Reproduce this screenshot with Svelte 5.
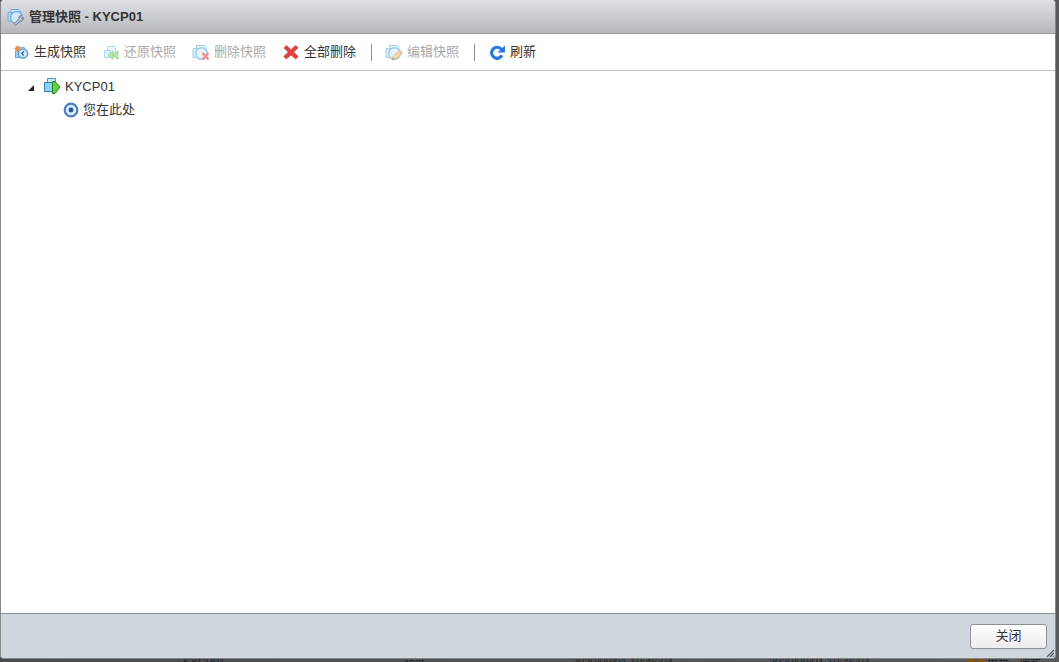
<script lang="ts">
  type Tool = { id: string; label: string; disabled?: boolean; separated?: boolean };

  const vmName = 'KYCP01';
  const tools: Tool[] = [
    { id: 'take', label: '生成快照' },
    { id: 'revert', label: '还原快照', disabled: true },
    { id: 'delete', label: '删除快照', disabled: true },
    { id: 'deleteAll', label: '全部删除' },
    { id: 'edit', label: '编辑快照', disabled: true, separated: true },
    { id: 'refresh', label: '刷新', separated: true }
  ];

  let expanded = $state(true);
</script>

<div class="stage">
  <section class="dialog" role="dialog" aria-labelledby="dialog-title">
    <header>
      <svg class="title-icon" viewBox="0 0 18 18" aria-hidden="true">
        <path d="M4 4V1.500h7.500l2 2V8H4z" fill="#cce9fb" stroke="#6aa9e0" />
        <path d="M1 4.500h5v8.500H1z" fill="#b4dcf8" stroke="#6aa9e0" />
        <circle cx="9.500" cy="9.500" r="6" fill="#d3e9fb" stroke="#7bb1e6" stroke-width="1.500" />
        <path d="M7 15.800l5-5c-.6-2 .8-3.800 2.700-3.600l-1.300 2 1.300 1.400 2-.8c.2 2-1.600 3.300-3.400 2.700l-4.700 4.700z" fill="#c6cad0" stroke="#747b86" />
      </svg>
      <h1 id="dialog-title">管理快照 - {vmName}</h1>
    </header>

    <div class="toolbar" role="toolbar" aria-label="管理快照">
      {#each tools as tool (tool.id)}
        {#if tool.separated}<span class="separator"></span>{/if}
        <button type="button" class="tool" disabled={tool.disabled}>
          {#if tool.id === 'take'}
            <svg viewBox="0 0 16 16" aria-hidden="true">
              <path d="M6 3.500h5.500v5H6z" fill="#cfe8fa" stroke="#79b4e8" />
              <path d="M2.500 6.500H7v7H2.500z" fill="#9fcdf2" stroke="#69a9e4" />
              <circle cx="10" cy="9.500" r="4.600" fill="#d8ecfb" stroke="#5a9ee0" stroke-width="1.500" />
              <path d="M11 7.200L8.700 9.500l2 2" fill="none" stroke="#2a5f9c" stroke-width="1.300" />
              <path d="M4.500 1.500v6M1.500 4.500h6M2.500 2.500l4 4M6.500 2.500l-4 4" stroke="#f08a3c" stroke-width="1.200" />
            </svg>
          {:else if tool.id === 'revert'}
            <svg viewBox="0 0 16 16" aria-hidden="true">
              <path d="M4.500 2.500h7l1 1v7h-8z" fill="#d3effb" stroke="#62b1df" />
              <path d="M1.500 6.500h6v7h-6z" fill="#b9e4f8" stroke="#62b1df" />
              <path d="M10 7v8.500l-5-4.200zM15 7v8.500l-5-4.200z" fill="#7ed45e" stroke="#2fa632" />
            </svg>
          {:else if tool.id === 'delete' || tool.id === 'edit'}
            <svg class="wide" viewBox="0 0 18 17" aria-hidden="true">
              <path d="M4.500 1.500h8l1.500 2v8H4.500z" fill="#d3effb" stroke="#4ba3d8" />
              <path d="M1 4.500h5v9H1z" fill="#b9e4f8" stroke="#4b9edb" />
              <circle cx="9.500" cy="9.500" r="5.800" fill="#cceafb" stroke="#4a9ad8" stroke-width="1.500" />
              {#if tool.id === 'delete'}
                <path d="M10.500 9l6 6.500M16.500 9l-6 6.500" stroke="#e02525" stroke-width="2.500" />
              {:else}
                <path d="M7 16l1.500-4 6-5.500 2.500 3-6 5.500z" fill="#e9b849" stroke="#a5762a" />
                <path d="M14 6.500l3 3" stroke="#e0705a" stroke-width="2" />
                <path d="M7 16l1-2.500 2 1.500z" fill="#444" />
              {/if}
            </svg>
          {:else if tool.id === 'deleteAll'}
            <svg viewBox="0 0 16 16" aria-hidden="true">
              <path d="M.8 4L3.500 1.500Q6 3.500 8 5.800 10.500 3 13 1.500L15.200 4Q12.500 5.800 10.800 8.300L15.300 12.500 12.700 15 8 11 3.300 15 .6 12.500 5.200 8.300Q3.500 5.800.8 4z" fill="#dc4440" stroke="#cd3a37" stroke-width=".6" />
            </svg>
          {:else}
            <svg viewBox="0 0 16 16" aria-hidden="true">
              <path d="M12.300 5.200A5.500 5.500 0 1 0 13 11.300" fill="none" stroke="#2678df" stroke-width="3.200" />
              <path d="M16 1.500v7H8.500l2.700-2.600z" fill="#2678df" />
            </svg>
          {/if}
          <span>{tool.label}</span>
        </button>
      {/each}
    </div>

    <div class="content" role="tree" aria-label="快照">
      <div class="node" role="treeitem" aria-selected="false" aria-expanded={expanded}>
        <button type="button" class="toggle" aria-label={vmName} onclick={() => (expanded = !expanded)}>
          <svg viewBox="0 0 8 8" aria-hidden="true"><path d="M7 1v6H1z" fill="#222" /></svg>
        </button>
        <svg class="vm-icon" viewBox="0 0 17 17" aria-hidden="true">
          <path d="M3.500.500h8v9h-8z" fill="#c5ecf8" stroke="#3f9bc9" />
          <path d="M.500 4.500h9v9h-9z" fill="#8fd0f6" stroke="#2e81c6" />
          <path d="M8.500 3.500H11l5 5.500-5 6.500H8.500z" fill="#5fd23c" stroke="#1f8424" />
        </svg>
        <span>{vmName}</span>
      </div>
      {#if expanded}
        <div class="node child" role="treeitem" aria-selected="false">
          <svg class="here-icon" viewBox="0 0 16 16" aria-hidden="true">
            <circle cx="8" cy="8" r="6.300" fill="#d9ebfb" stroke="#4a80bd" stroke-width="2.200" />
            <circle cx="8" cy="8" r="2.400" fill="#1d5596" />
          </svg>
          <span>您在此处</span>
        </div>
      {/if}
    </div>

    <footer>
      <button type="button" class="close">关闭</button>
      <svg class="grip" viewBox="0 0 8 8" aria-hidden="true">
        <path d="M1 8L8 1M4 8l4-4M7 8l1-1" stroke="#4d5358" stroke-width="1.200" />
      </svg>
    </footer>
  </section>

  <div class="behind" aria-hidden="true">
    <span>{vmName}</span>
    <span>root</span>
    <span>2020/09/01 10:46:04</span>
    <span>2020/09/01 10:46:04</span>
    <span class="status"><i></i><i></i>更新 - 搜索</span>
  </div>
</div>

<style>
  :global(body) {
    margin: 0;
    background: #505153;
  }

  .stage {
    box-sizing: border-box;
    display: flex;
    flex-direction: column;
    height: 100vh;
    overflow: hidden;
    font: 13px/20px "Liberation Sans", "Noto Sans CJK SC", sans-serif;
    color: #333;
    background: linear-gradient(90deg, #4b4c4e, #58595b);
  }

  .dialog {
    box-sizing: border-box;
    flex: 1;
    min-height: 0;
    display: flex;
    flex-direction: column;
    margin-right: 3px;
    border: 1px solid #858688;
    border-top: 0;
    border-radius: 4px;
    overflow: hidden;
    background: #fff;
  }

  header {
    box-sizing: border-box;
    display: flex;
    align-items: center;
    gap: 4px;
    height: 34px;
    padding: 0 6px;
    border-bottom: 1px solid #98999b;
    background: linear-gradient(#dfe0e3, #b7b8bc);
  }

  h1 {
    margin: 0;
    font-size: 13px;
    font-weight: bold;
  }

  svg {
    display: block;
    flex: none;
  }

  .title-icon {
    width: 18px;
    height: 18px;
  }

  button {
    font: inherit;
    color: inherit;
  }

  .toolbar {
    box-sizing: border-box;
    display: flex;
    align-items: center;
    gap: 1px;
    height: 37px;
    padding: 0 4px;
    border-bottom: 1px solid #c3c3c3;
  }

  .tool {
    display: flex;
    align-items: center;
    gap: 5px;
    padding: 0 8px;
    border: 0;
    background: none;
    white-space: nowrap;
  }

  .tool svg {
    width: 16px;
    height: 16px;
  }

  .tool svg.wide {
    width: 18px;
    height: 17px;
    margin: 0 -1px;
  }

  .tool:disabled {
    color: #aaa;
  }

  .tool:disabled svg {
    opacity: 0.5;
  }

  .separator {
    width: 1px;
    height: 17px;
    margin: 0 5px 0 6px;
    background: #8c8c8c;
  }

  .content {
    flex: 1;
    min-height: 0;
    padding: 4px 0 0 26px;
    overflow: auto;
  }

  .node {
    display: flex;
    align-items: center;
    gap: 4px;
    height: 23px;
  }

  .child {
    padding-left: 36px;
  }

  .toggle {
    padding: 3px 0 0;
    margin-right: 5px;
    border: 0;
    background: none;
  }

  .toggle svg {
    width: 8px;
    height: 8px;
  }

  .vm-icon {
    width: 17px;
    height: 17px;
  }

  .here-icon {
    width: 16px;
    height: 16px;
  }

  footer {
    position: relative;
    box-sizing: border-box;
    display: flex;
    align-items: center;
    justify-content: flex-end;
    height: 45px;
    padding: 0 8px;
    border-top: 1px solid #8e9092;
    background: #d1d7de;
  }

  .close {
    box-sizing: border-box;
    width: 77px;
    height: 25px;
    padding: 0;
    border: 1px solid #8c8f93;
    border-radius: 3px;
    background: linear-gradient(#fff, #ececee);
  }

  .grip {
    position: absolute;
    right: 1px;
    bottom: 1px;
    width: 8px;
    height: 8px;
  }

  .behind {
    display: grid;
    grid-template-columns: 222fr 167fr 197fr 198fr 92fr;
    height: 3px;
    padding-left: 183px;
    overflow: hidden;
    font-size: 11px;
    line-height: 7px;
    color: #202225;
    white-space: nowrap;
  }

  .status {
    display: flex;
    gap: 2px;
  }

  .status i {
    width: 8px;
    height: 8px;
    border-radius: 3px;
    background: #8a520c;
  }
</style>
